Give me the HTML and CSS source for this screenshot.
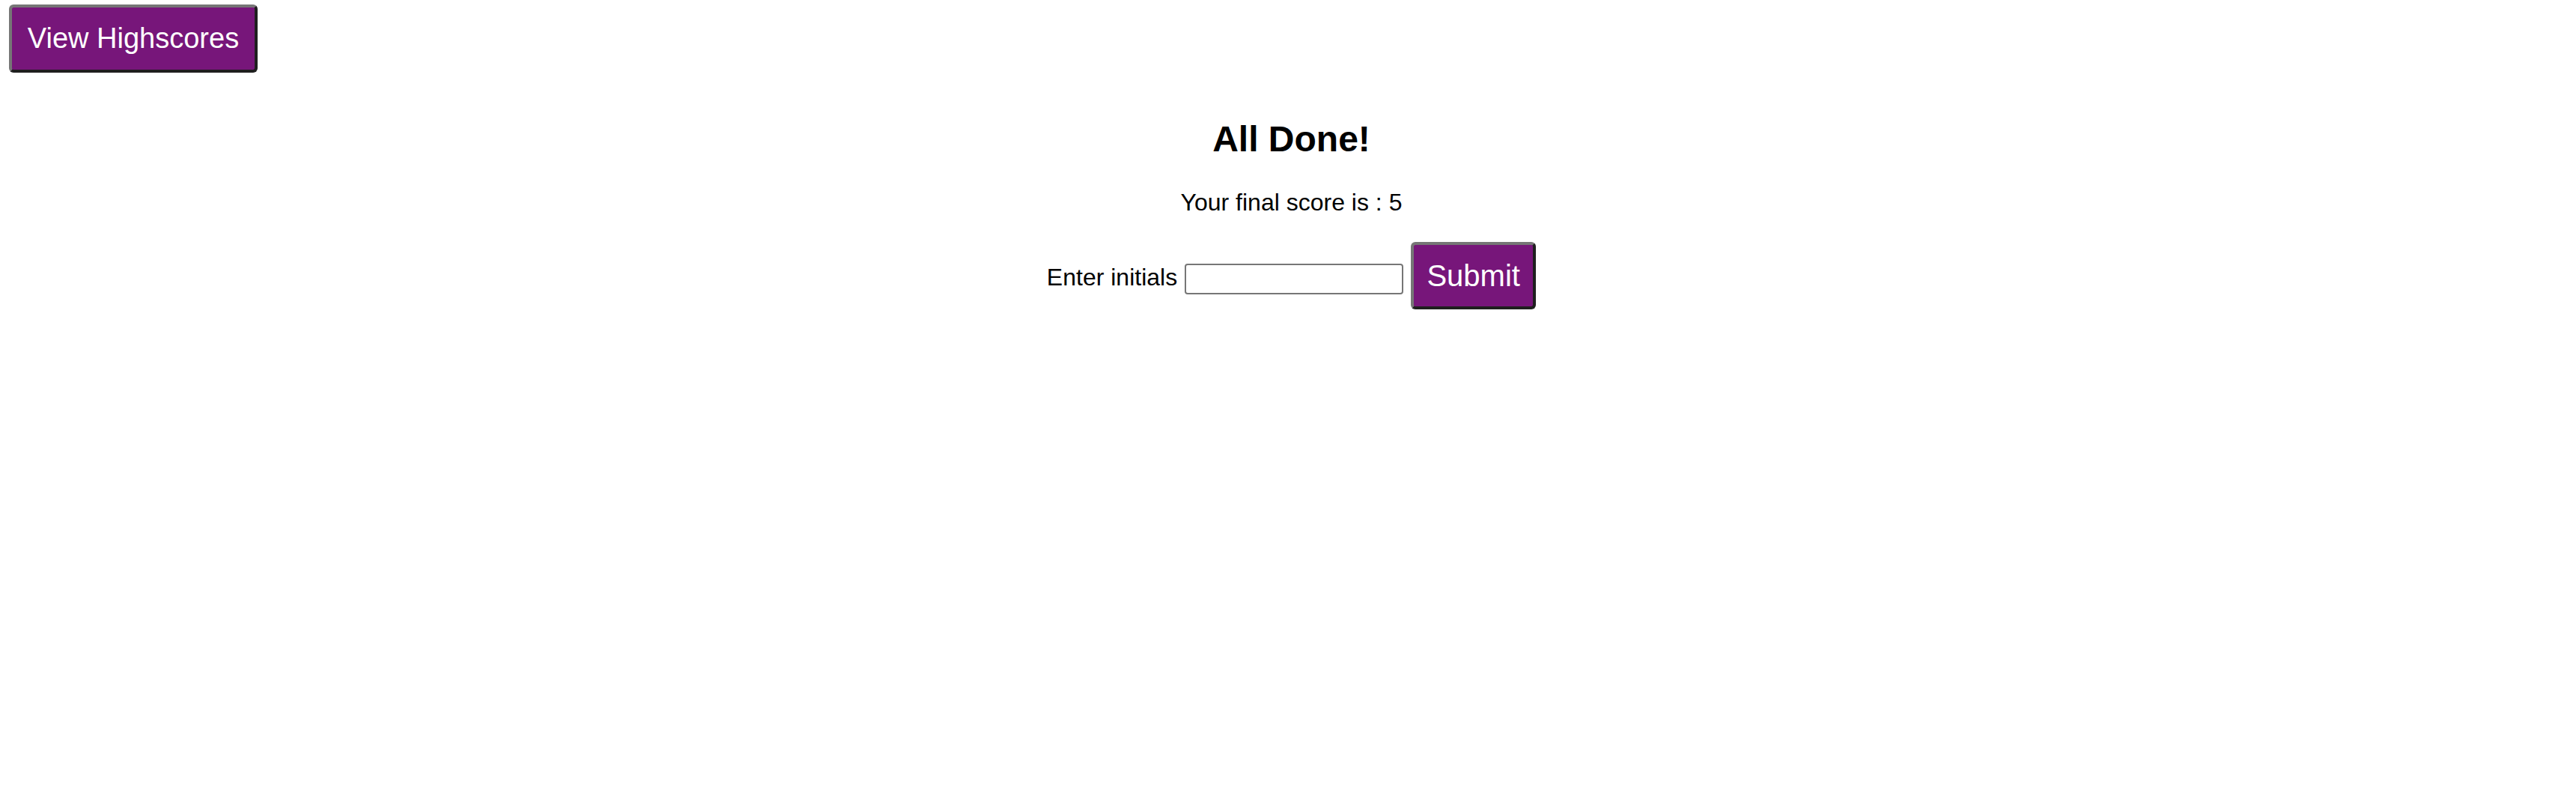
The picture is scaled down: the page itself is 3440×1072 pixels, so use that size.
FILE: index.html
```html
<!DOCTYPE html>
<html lang="en">
<head>
<meta charset="utf-8">
<title>Quiz - All Done</title>
<link rel="stylesheet" href="styles.css">
</head>
<body>
<header class="top">
  <button class="btn btn-highscores" type="button">View Highscores</button>
</header>
<main class="done">
  <h2 class="done-title">All Done!</h2>
  <p class="done-score">Your final score is : 5</p>
  <form class="done-form" onsubmit="return false;">
    <label class="done-label" for="initials">Enter initials</label>
    <input class="done-input" id="initials" type="text">
    <button class="btn btn-submit" type="submit">Submit</button>
  </form>
</main>
</body>
</html>
```

FILE: styles.css
```css
html, body {
  margin: 0;
  padding: 0;
  background: #ffffff;
}

body {
  font-family: "Liberation Sans", Arial, sans-serif;
  color: #000000;
  width: 3440px;
  height: 1072px;
  overflow: hidden;
}

.top {
  display: flex;
  padding: 6px 12px 0;
}

.btn {
  font-family: "Liberation Sans", Arial, sans-serif;
  background: #77167a;
  color: #ffffff;
  border-style: solid;
  border-width: 4px;
  border-color: #767676 #1f1f1f #1f1f1f #767676;
  border-radius: 6px;
  margin: 0;
  cursor: pointer;
}

.btn-highscores {
  font-size: 38px;
  width: 332px;
  height: 91px;
  padding: 0 16px;
}

.done {
  display: flex;
  flex-direction: column;
  align-items: center;
  padding-left: 9px;
}

.done-title {
  font-size: 48px;
  font-weight: bold;
  line-height: 55px;
  margin: 61px 0 0;
}

.done-score {
  font-size: 32px;
  line-height: 37px;
  margin: 39px 0 0;
}

.done-form {
  display: flex;
  align-items: center;
  gap: 10px;
  margin-top: 34px;
}

.done-label {
  font-size: 32px;
  line-height: 37px;
  margin-top: 5px;
}

.done-input {
  box-sizing: border-box;
  width: 292px;
  height: 41px;
  border: 2px solid #767676;
  border-radius: 4px;
  padding: 2px 4px;
  font-size: 26px;
  font-family: "Liberation Sans", Arial, sans-serif;
  margin: 9px 0 0;
}

.btn-submit {
  font-size: 40px;
  width: 167px;
  height: 90px;
  padding: 0 16px;
}
```
